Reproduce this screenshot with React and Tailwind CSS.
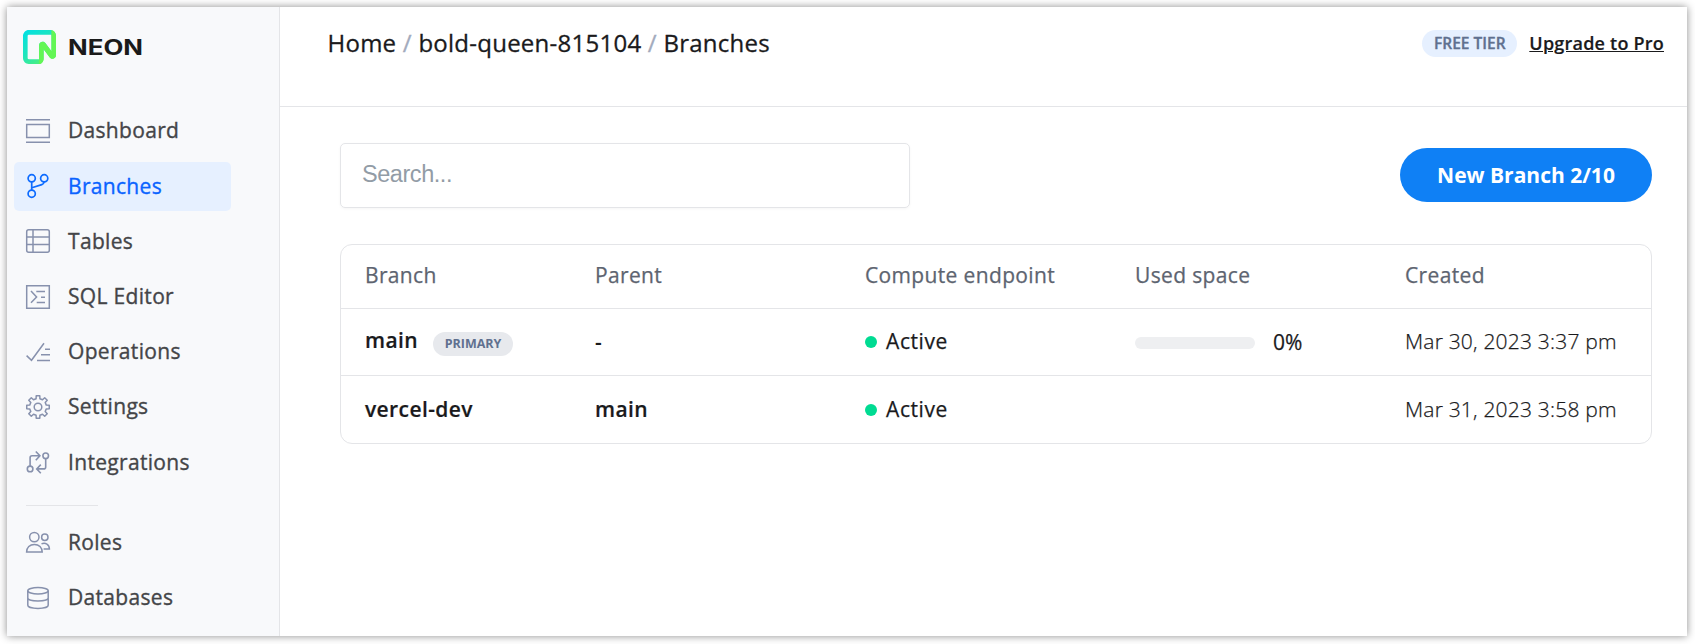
import React from "react";

function Icon({ children, className = "text-[#8791ad]", w = 1.5 }) {
  return (
    <svg
      viewBox="0 0 24 24"
      className={`size-6 shrink-0 overflow-visible ${className}`}
      fill="none"
      stroke="currentColor"
      strokeWidth={w}
    >
      {children}
    </svg>
  );
}

function gearPath() {
  const pts = [];
  const at = (deg, r) => {
    const a = (deg * Math.PI) / 180;
    return `${(12 + r * Math.sin(a)).toFixed(2)} ${(12 - r * Math.cos(a)).toFixed(2)}`;
  };
  for (let i = 0; i < 8; i++) {
    const a = i * 45;
    pts.push(at(a - 13, 8.5), at(a - 9, 11.4), at(a + 9, 11.4), at(a + 13, 8.5));
  }
  return `M${pts.join("L")}Z`;
}

const icons = {
  Dashboard: (
    <Icon>
      <path d="M0 .7h24M0 23.3h24M.7 5.4h22.6v13.1H.7z" />
    </Icon>
  ),
  Branches: (
    <Icon className="text-[#0d6bff]" w={1.7}>
      <circle cx="5.7" cy="4.3" r="3.6" />
      <circle cx="18.2" cy="4.3" r="3.6" />
      <circle cx="5.7" cy="19.7" r="3.6" />
      <path d="M5.7 8v8M18.1 8c-.2 1.6-1 2.2-2.3 2.6L5.9 13.8" />
    </Icon>
  ),
  Tables: (
    <Icon>
      <rect x=".7" y=".7" width="22.6" height="22.6" rx="2" />
      <path d="M7 .6v22.8M.6 8h22.8M.6 15.5h22.8" />
    </Icon>
  ),
  "SQL Editor": (
    <Icon>
      <path d="M.7.7h22.6v22.6H.7zM5 6l5.6 6L5 17.8M10.3 6.6H19M15 12.2h4M10.7 17.5H19" />
    </Icon>
  ),
  Operations: (
    <Icon>
      <path d="M.6 15.6l4.9 4.7L18 3.2M19 9.2h5M15 14.8h9M11 20.5h13" />
    </Icon>
  ),
  Settings: (
    <Icon>
      <path d={gearPath()} strokeLinejoin="round" />
      <circle cx="12" cy="12" r="3.8" />
    </Icon>
  ),
  Integrations: (
    <Icon w={1.6}>
      <circle cx="4.1" cy="18.9" r="2.8" />
      <circle cx="19.7" cy="5.8" r="2.8" />
      <path d="M4.1 16V7.8q0-2 2-2h7.6M9.8 1.5L13.9 5.8 9.8 10.2M19.7 8.7v8.2q0 2-2 2h-7M14.8 14.6L10.7 18.9l4.1 4.3" />
    </Icon>
  ),
  Roles: (
    <Icon>
      <circle cx="8.3" cy="6.1" r="4.7" />
      <circle cx="18.8" cy="6.3" r="3.2" />
      <path d="M.6 21.1c0-4.6 3.2-7.7 7.8-7.7s7.8 3.1 7.8 7.7zM15.5 12.9c3.9-1.6 7.9.6 7.9 5.2h-5.8" />
    </Icon>
  ),
  Databases: (
    <Icon>
      <ellipse cx="12" cy="4.7" rx="10.2" ry="3.2" />
      <path d="M1.8 4.7v14.6c0 1.8 4.6 3.1 10.2 3.1s10.2-1.3 10.2-3.1V4.7M1.8 12c0 1.8 4.6 3 10.2 3s10.2-1.2 10.2-3" />
    </Icon>
  ),
};

function NavItem({ label, active }) {
  return (
    <a
      className={`flex h-[49px] w-[217px] items-center gap-[18px] rounded-[5px] pl-3 text-[21px] leading-none font-medium tracking-[0.32px] [-webkit-text-stroke:0.35px] ${
        active ? "bg-[#e6f0ff] text-[#0a63ff]" : "text-[#444548]"
      }`}
    >
      {icons[label]}
      <span className={label === "Dashboard" ? "pb-0.5" : ""}>{label}</span>
    </a>
  );
}

function Logo() {
  return (
    <div className="flex h-[34px] items-center gap-3 pl-[9px]">
      <svg viewBox="0 0 57 57" preserveAspectRatio="none" className="h-[34px] w-[33px]">
        <defs>
          <linearGradient id="base" x1="0" y1="0" x2=".75" y2="1">
            <stop offset="0" stopColor="#00dfe6" />
            <stop offset=".5" stopColor="#1fe5bd" />
            <stop offset="1" stopColor="#5bf26a" />
          </linearGradient>
        </defs>
        <path
          fill="url(#base)"
          d="M0 10C0 4.477 4.477 0 10 0h37c5.523 0 10 4.477 10 10v32.3c0 5.714-7.231 8.194-10.739 3.684L35.6 32.3V48c0 5-4 9-9 9H10C4.477 57 0 52.523 0 47V10zm10-2a2 2 0 0 0-2 2v37c0 1.105.895 2 2 2h17.1c.55 0 .7-.45.7-1V25.6c0-5.714 7.23-8.194 10.738-3.683L49.2 35.6V10c0-1.105.104-2-1-2H10z"
        />
        <path
          fill="#63f655"
          d="M49 0c5 1 8 5 8 10v32.3c0 5.714-7.231 8.194-10.739 3.684L35.6 32.3V48c0 5-3.6 9-7.8 9V25.6c0-5.714 7.23-8.194 10.738-3.683L49.2 35.6z"
        />
      </svg>
      <span className="origin-left scale-x-[1.23] font-['Inter'] text-[21px] leading-none font-bold text-[#1a1a1a]">
        NEON
      </span>
    </div>
  );
}

function Active() {
  return (
    <div className="flex items-center gap-[9px] font-medium tracking-[0.6px] [-webkit-text-stroke:0.25px]">
      <span className="size-3 rounded-full bg-[#00db92]" />
      <span className="-mt-0.5">Active</span>
    </div>
  );
}

const row = "grid grid-cols-[230px_270px_270px_270px_1fr] items-center pl-6";

export default function App() {
  return (
    <div className="h-[644px] w-[1695px] overflow-hidden bg-white p-[7px] pr-2 pb-2 font-['Open_Sans',sans-serif] text-[#1a1a1c]">
      <div className="flex h-full bg-white shadow-[0_0_8px_rgba(0,0,0,0.45)]">
        <aside className="w-[273px] shrink-0 border-r border-[#e4e5e8] bg-[#f8f9fb] pt-[23px] pl-[7px]">
          <Logo />
          <nav className="mt-[42.5px] flex flex-col gap-[6.2px]">
            <NavItem label="Dashboard" />
            <NavItem label="Branches" active />
            <NavItem label="Tables" />
            <NavItem label="SQL Editor" />
            <NavItem label="Operations" />
            <NavItem label="Settings" />
            <NavItem label="Integrations" />
          </nav>
          <div className="mt-[18px] mb-[12.5px] ml-3 h-px w-[72px] bg-[#e4e5e8]" />
          <nav className="flex flex-col gap-[6.2px]">
            <NavItem label="Roles" />
            <NavItem label="Databases" />
          </nav>
        </aside>
        <main className="min-w-0 flex-1">
          <header className="flex h-[100px] items-start justify-between border-b border-[#e4e5e8] pr-[23px] pl-[47.5px]">
            <div className="mt-5 flex gap-[6.5px] text-[24px] leading-8 font-medium tracking-[0.25px] [-webkit-text-stroke:0.3px]">
              <span>Home</span>
              <span className="text-[#a3abbd]">/</span>
              <span>bold-queen-815104</span>
              <span className="text-[#a3abbd]">/</span>
              <span>Branches</span>
            </div>
            <div className="mt-[23px] flex items-center gap-3">
              <span className="flex h-[27px] w-[95px] items-center justify-center rounded-full bg-[#e6f0ff] text-[15.5px] font-semibold text-[#60708f] [-webkit-text-stroke:0.35px]">
                FREE TIER
              </span>
              <a className="text-[18px] leading-[27px] font-semibold tracking-[0.22px] underline [-webkit-text-stroke:0.2px]">
                Upgrade to Pro
              </a>
            </div>
          </header>
          <section className="pt-9 pr-[35px] pl-[60px]">
            <div className="flex items-center justify-between">
              <input
                className="h-[65px] w-[570px] rounded-[5px] border border-[#e4e5e8] pr-5 pb-[3px] pl-[21px] font-['Liberation_Sans',sans-serif] text-[23.5px] tracking-[-0.45px] shadow-[0_1px_3px_rgba(0,0,0,0.04)] placeholder:text-[#929ca6]"
                placeholder="Search..."
              />
              <button className="mb-px h-[54px] w-[252px] rounded-full bg-[#0f80f5] pt-0.5 text-[21px] font-bold text-white">
                New Branch 2/10
              </button>
            </div>
            <div className="mt-9 rounded-xl border border-[#e4e5e8] text-[21px] leading-8">
              <div
                className={`${row} h-[63px] pb-[3px] font-medium tracking-[0.35px] text-[#5d6470] [-webkit-text-stroke:0.25px]`}
              >
                <div>Branch</div>
                <div>Parent</div>
                <div>Compute endpoint</div>
                <div>Used space</div>
                <div>Created</div>
              </div>
              <div className={`${row} h-[67px] border-t border-[#e4e5e8]`}>
                <div className="flex items-center gap-[15px] font-semibold">
                  <span className="pb-1 tracking-[0.4px] [-webkit-text-stroke:0.2px]">main</span>
                  <span className="mt-1 flex h-6 w-20 items-center justify-center rounded-full bg-[#e7e9ed] text-[12.5px] font-bold text-[#60708f]">
                    PRIMARY
                  </span>
                </div>
                <div className="font-semibold">-</div>
                <Active />
                <div className="flex items-center gap-[18px] pt-0.5 font-medium [-webkit-text-stroke:0.25px]">
                  <span className="h-3 w-[120px] rounded-full bg-[#eeeff1]" />
                  <span className="-mt-0.5">0%</span>
                </div>
                <div className="pb-0.5 font-light tracking-[0.2px] [-webkit-text-stroke:0.25px]">
                  Mar 30, 2023 3:37 pm
                </div>
              </div>
              <div className={`${row} h-[68px] border-t border-[#e4e5e8] tracking-[0.4px]`}>
                <div className="pb-0.5 font-semibold [-webkit-text-stroke:0.2px]">vercel-dev</div>
                <div className="pb-0.5 font-semibold [-webkit-text-stroke:0.2px]">main</div>
                <Active />
                <div />
                <div className="pb-0.5 font-light tracking-[0.2px] [-webkit-text-stroke:0.25px]">
                  Mar 31, 2023 3:58 pm
                </div>
              </div>
            </div>
          </section>
        </main>
      </div>
    </div>
  );
}
